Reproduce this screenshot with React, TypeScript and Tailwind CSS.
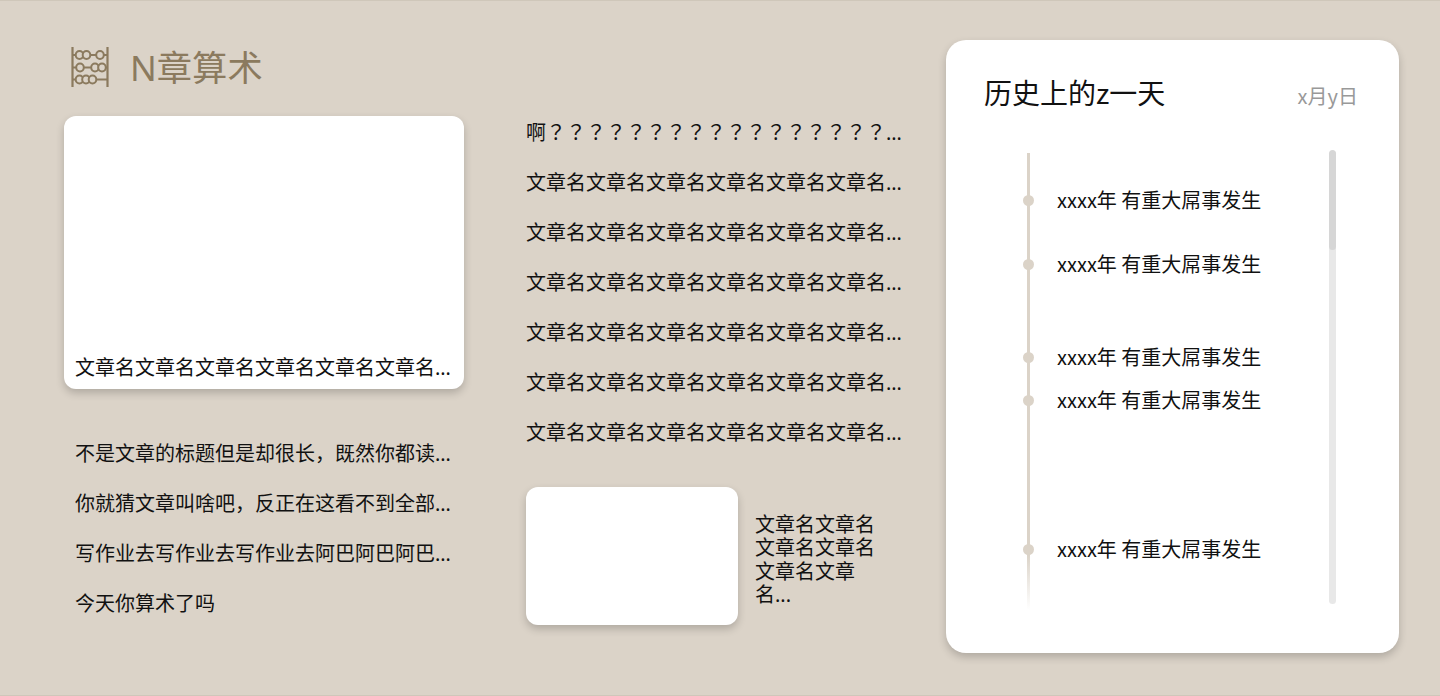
const F = '[font-family:"Noto_Sans","Noto_Sans_CJK_SC",sans-serif]';

function Abacus() {
  const beads = [
    [8.5, 8], [15.5, 8], [29, 8],
    [9, 20.5], [24, 20.5], [31, 20.5],
    [8.5, 32.5], [15, 32.5], [21.5, 32.5],
  ];
  return (
    <svg width="38" height="40" viewBox="0 0 38 40" fill="none" stroke="#8b7a5e" className="block">
      <path d="M1.500 0V40M36.500 0V40" strokeWidth="2.200" />
      <path d="M1.500 8H36.500M1.500 20.500H36.500M1.500 32.500H36.500" strokeWidth="2" />
      {beads.map(([x, y]) => (
        <ellipse key={`${x}-${y}`} cx={x} cy={y} rx="3.800" ry="4" fill="#dbd3c8" strokeWidth="2" />
      ))}
    </svg>
  );
}

const name = '文章名文章名文章名文章名文章名文章名文章名文章名文章名';
const left = [
  '不是文章的标题但是却很长，既然你都读到这里了那',
  '你就猜文章叫啥吧，反正在这看不到全部的文章标题',
  '写作业去写作业去写作业去阿巴阿巴阿巴阿巴阿巴阿巴',
  '今天你算术了吗',
];
const events = ['mt-[34px]', 'mt-[32px]', 'mt-[61px]', 'mt-[11px]', 'mt-[117px]'];

export default function App() {
  return (
    <div className={`h-[696px] w-[1440px] overflow-hidden bg-[#dbd3c8] border-y border-[#cfc7ba] flex text-[#111] ${F}`}>
      <div className="w-[462px] ml-[64px] shrink-0">
        <div className="h-[40px] mt-[46px] ml-[7px] flex items-center gap-[21px]">
          <Abacus />
          <span className="text-[35.300px] leading-[40px] text-[#8b7a5e]">N章算术</span>
        </div>
        <div className="w-[400px] h-[273px] mt-[29px] bg-white rounded-[12px] shadow-[0_4px_8px_rgba(0,0,0,0.2)] flex flex-col justify-end pb-[3px] px-[11px]">
          <p className="text-[20px] leading-[36px] truncate">{name}</p>
        </div>
        <div className="mt-[40px] ml-[11px] w-[376px]">
          {left.map((t) => (
            <p key={t} className="text-[20px] leading-[50px] h-[50px] truncate">{t}</p>
          ))}
        </div>
      </div>
      <div className="w-[420px] shrink-0 pt-[107px]">
        <div className="w-[376px]">
          <p className='text-[20px] leading-[50px] h-[50px] truncate [font-family:"Noto_Sans","Noto_Sans_CJK_TC",sans-serif]'>啊？？？？？？？？？？？？？？？？？？？？？？？？</p>
          {[0, 1, 2, 3, 4, 5].map((i) => (
            <p key={i} className="text-[20px] leading-[50px] h-[50px] truncate">{name}</p>
          ))}
        </div>
        <div className="mt-[29px] flex items-center gap-[17px]">
          <div className="w-[212px] h-[138px] bg-white rounded-[12px] shadow-[0_4px_8px_rgba(0,0,0,0.2)]" />
          <p className="w-[120px] mt-[7px] text-[20px] leading-[23.300px]">
            文章名文章名<br />文章名文章名<br />文章名文章<br />名...
          </p>
        </div>
      </div>
      <div className='w-[453px] h-[613px] mt-[39px] bg-white rounded-[20px] shadow-[0_4px_8px_rgba(0,0,0,0.2)] shrink-0 px-[38px] pt-[34px] [font-family:"Noto_Sans_CJK_SC",sans-serif]'>
        <div className="flex items-end justify-between pr-[3px] h-[40px]">
          <span className="text-[28px] leading-[40px] -translate-y-[2px]">历史上的z一天</span>
          <span className="text-[20px] leading-[36px] text-[#999]">x月y日</span>
        </div>
        <div className="mt-[36px] flex">
          <div className="relative ml-[43px] w-[302px] h-[460px]">
            <div className="absolute left-0 top-[3px] bottom-0 w-[3px] bg-gradient-to-b from-[#dbd3c8] from-[88%] to-transparent" />
            {events.map((c, i) => (
              <div key={i} className={`relative h-[32px] flex items-center ${c}`}>
                <span className="absolute left-[-4px] w-[11px] h-[11px] rounded-full bg-[#dbd3c8]" />
                <span className="ml-[30px] text-[20px] leading-[32px] whitespace-nowrap">xxxx年 有重大屌事发生</span>
              </div>
            ))}
          </div>
          <div className="w-[7px] h-[454px] rounded-full bg-[#e8e8e8] overflow-hidden">
            <div className="h-[100px] rounded-full bg-[#d6d6d6]" />
          </div>
        </div>
      </div>
    </div>
  );
}
